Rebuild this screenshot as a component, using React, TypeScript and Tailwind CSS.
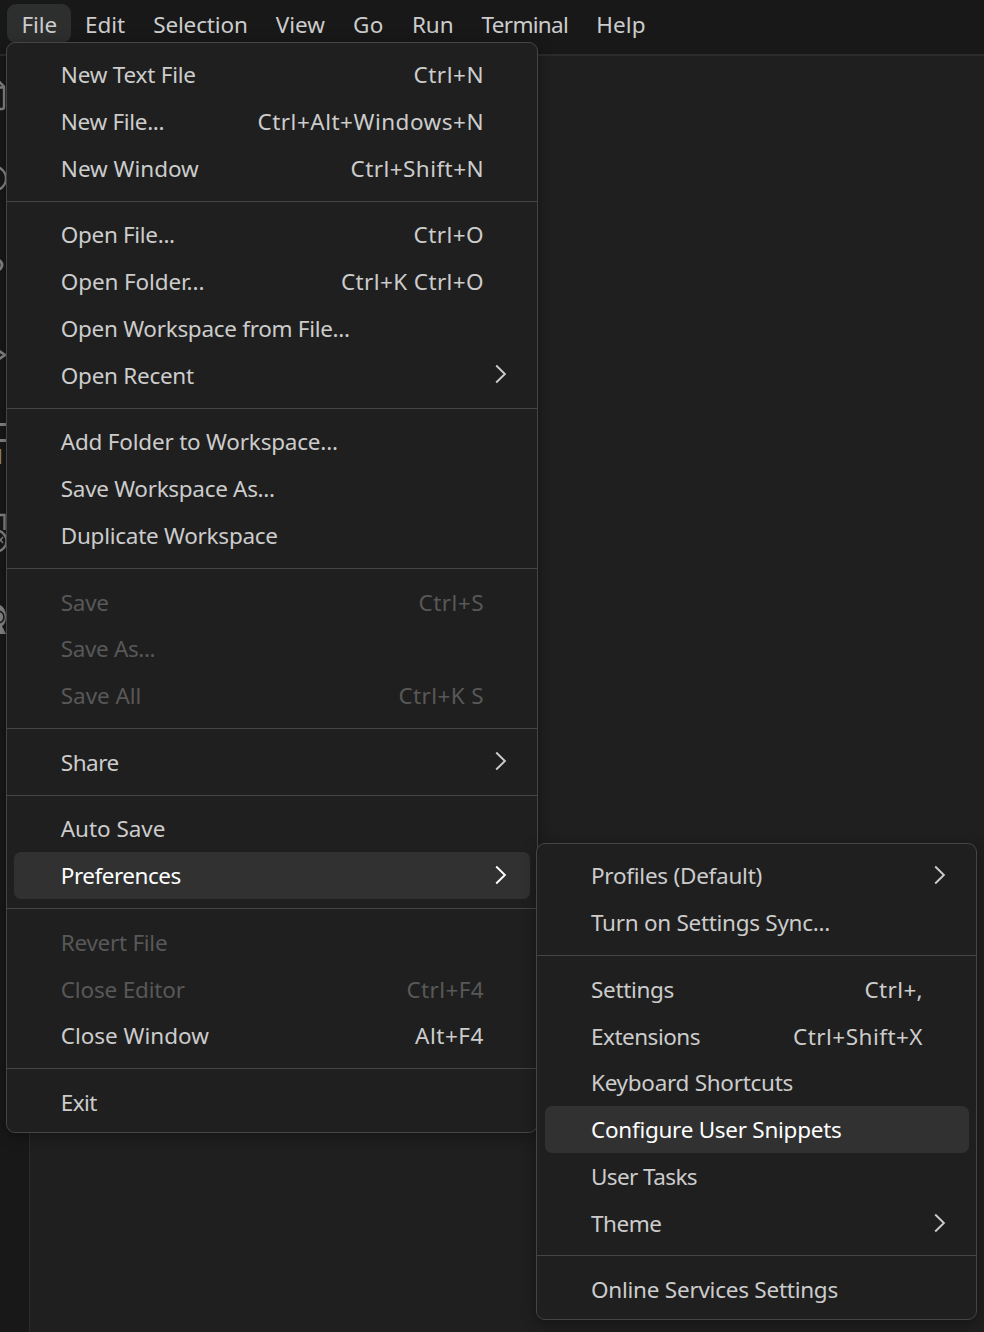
import { useLayoutEffect, useRef, useState } from "react";
import clsx from "clsx";

type Text = [text: string, width: number];
type Item = { label: Text; keys?: Text; submenu?: boolean; disabled?: boolean; active?: boolean };

const bar: Text[] = [
  ["File", 35.5],
  ["Edit", 40],
  ["Selection", 94.5],
  ["View", 49],
  ["Go", 31],
  ["Run", 41.5],
  ["Terminal", 86.5],
  ["Help", 49.5],
];

const fileMenu: Item[][] = [
  [
    { label: ["New Text File", 135], keys: ["Ctrl+N", 70.5] },
    { label: ["New File...", 103.5], keys: ["Ctrl+Alt+Windows+N", 226.5] },
    { label: ["New Window", 138], keys: ["Ctrl+Shift+N", 133.5] },
  ],
  [
    { label: ["Open File...", 114], keys: ["Ctrl+O", 70.5] },
    { label: ["Open Folder...", 143.5], keys: ["Ctrl+K Ctrl+O", 143] },
    { label: ["Open Workspace from File...", 289] },
    { label: ["Open Recent", 133], submenu: true },
  ],
  [
    { label: ["Add Folder to Workspace...", 277] },
    { label: ["Save Workspace As...", 214] },
    { label: ["Duplicate Workspace", 217] },
  ],
  [
    { label: ["Save", 48], keys: ["Ctrl+S", 65.5], disabled: true },
    { label: ["Save As...", 94.5], disabled: true },
    { label: ["Save All", 80.5], keys: ["Ctrl+K S", 85.5], disabled: true },
  ],
  [{ label: ["Share", 58], submenu: true }],
  [{ label: ["Auto Save", 104.5] }, { label: ["Preferences", 120], submenu: true, active: true }],
  [
    { label: ["Revert File", 106.5], disabled: true },
    { label: ["Close Editor", 124], keys: ["Ctrl+F4", 77.5], disabled: true },
    { label: ["Close Window", 148], keys: ["Alt+F4", 69] },
  ],
  [{ label: ["Exit", 36] }],
];

const preferencesMenu: Item[][] = [
  [
    { label: ["Profiles (Default)", 171], submenu: true },
    { label: ["Turn on Settings Sync...", 239] },
  ],
  [
    { label: ["Settings", 83], keys: ["Ctrl+,", 58.5] },
    { label: ["Extensions", 109], keys: ["Ctrl+Shift+X", 130] },
    { label: ["Keyboard Shortcuts", 202] },
    { label: ["Configure User Snippets", 250.5], active: true },
    { label: ["User Tasks", 106] },
    { label: ["Theme", 70.5], submenu: true },
  ],
  [{ label: ["Online Services Settings", 247] }],
];

/** Text whose letter spacing is adjusted so that it takes exactly the given width. */
function FitText({ value: [text, width] }: { value: Text }) {
  const ref = useRef<HTMLSpanElement>(null);
  const [spacing, setSpacing] = useState(0);
  useLayoutEffect(() => {
    const natural = ref.current!.getBoundingClientRect().width;
    setSpacing((width - natural) / text.length);
  }, [text, width]);
  return (
    <span ref={ref} className="inline-block shrink-0 whitespace-pre" style={{ letterSpacing: spacing }}>
      {text}
    </span>
  );
}

function Chevron() {
  return (
    <svg className="mt-[-3px] h-5 w-3 shrink-0" viewBox="0 0 12 20" fill="none" stroke="currentColor" strokeWidth="1.9">
      <path d="M1.2 1.5 9.9 10 1.2 18.5" />
    </svg>
  );
}

function Menu({ groups, className, rowClassName }: { groups: Item[][]; className: string; rowClassName: string }) {
  return (
    <div
      className={clsx(
        "absolute rounded-[9px] border border-[#454545] bg-[#1f1f1f] text-[#cccccc] shadow-[0_3px_14px_rgba(0,0,0,0.36)]",
        className,
      )}
    >
      {groups.map((group, i) => (
        <div key={i} className={clsx(i > 0 && "mt-[9.1px] border-t border-[#454545] pt-[9.5px]")}>
          {group.map((item) => (
            <div
              key={item.label[0]}
              className={clsx(
                "mr-[7px] flex h-[46.875px] items-center rounded-[7px]",
                rowClassName,
                item.active && "bg-[#313131] text-white",
                item.disabled && "text-[#585858]",
              )}
            >
              <FitText value={item.label} />
              <span className="grow" />
              {item.keys && (
                <span className="mr-[46px] flex">
                  <FitText value={item.keys} />
                </span>
              )}
              {item.submenu && (
                <span className="mr-[23px] flex">
                  <Chevron />
                </span>
              )}
            </div>
          ))}
        </div>
      ))}
    </div>
  );
}

function ActivityIcons() {
  return (
    <svg className="h-[600px] w-[6px]" viewBox="0 56 6 600" fill="none" stroke="#868686" strokeWidth="2.4">
      <path d="M-1 81.5 4 86.5V107q0 2-2 2H-4M-1 87.5H4" />
      <circle cx="-6" cy="178.5" r="12" />
      <circle cx="-3" cy="265" r="5" strokeWidth="3" />
      <path d="M-4 349 5 355-4 361" strokeWidth="2.6" />
      <path d="M-1 424.5H7M-1 440.5H7" strokeWidth="2.8" />
      <path d="M0 449V464" stroke="#a08050" />
      <path d="M-1 515H4.5V530" />
      <circle cx="-4" cy="541" r="10.5" />
      <path d="M-2 537 3 543M3 537-2 543" strokeWidth="1.5" />
      <path d="M0 605Q6 608 6 616T2 626L6 634H-2Z" fill="#868686" stroke="none" />
      <circle cx="-2" cy="617" r="6" stroke="#181818" strokeWidth="1.5" />
    </svg>
  );
}

export default function App() {
  return (
    <div className="relative flex h-[1332px] w-[984px] flex-col overflow-hidden bg-[#1f1f1f] font-['Noto_Sans','Open_Sans',sans-serif] text-[22.5px] leading-[30px] text-[#cccccc]">
      <div className="flex h-14 shrink-0 items-start border-b-2 border-[#2b2b2b] bg-[#181818] pt-1 pl-[7px]">
        {bar.map((value, i) => (
          <div
            key={value[0]}
            className={clsx(
              "flex h-[39px] items-center rounded-[9px] pt-[3px] pr-[13.6px] pl-[14.5px]",
              i === 0 && "bg-[#2d2e2e]",
            )}
          >
            <FitText value={value} />
          </div>
        ))}
      </div>
      <div className="flex grow">
        <div className="w-[30px] border-r border-[#2b2b2b] bg-[#181818]">
          <ActivityIcons />
        </div>
      </div>
      <Menu
        groups={fileMenu}
        className="top-[42px] left-[6px] h-[1091px] w-[532px] pt-[8px]"
        rowClassName="ml-[7px] pt-[1.3px] pl-[46.8px]"
      />
      <Menu
        groups={preferencesMenu}
        className="top-[843px] left-[536px] h-[477px] w-[441px] pt-[7.8px]"
        rowClassName="ml-[8px] pt-[2.1px] pl-[46px]"
      />
    </div>
  );
}
